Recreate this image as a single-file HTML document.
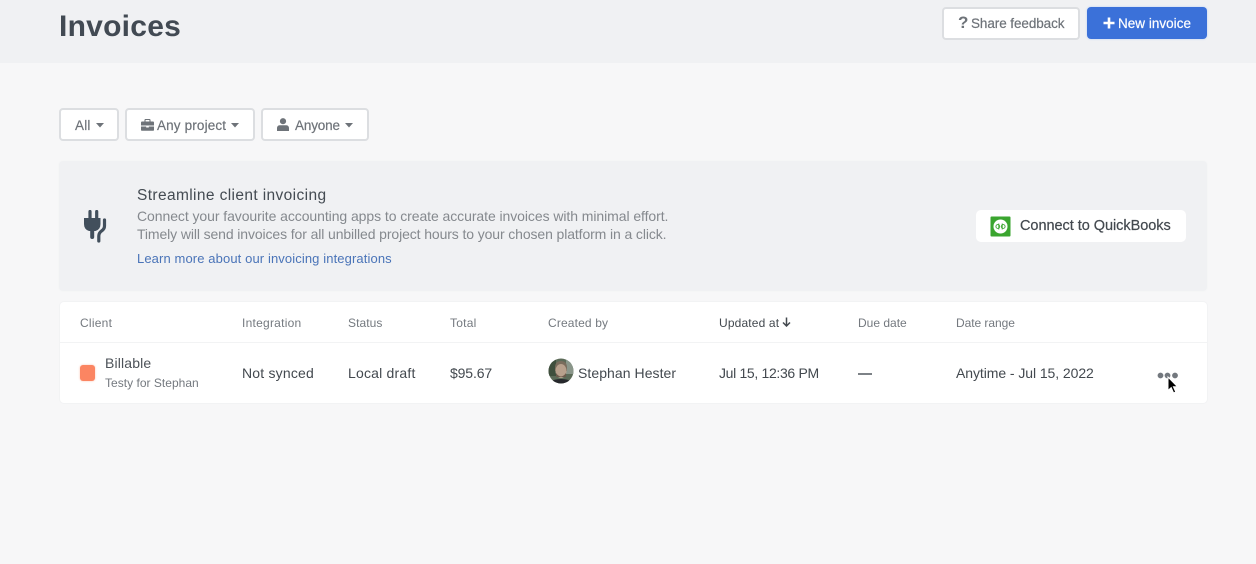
<!DOCTYPE html>
<html><head><meta charset="utf-8">
<style>
html,body{margin:0;padding:0;width:1256px;height:564px;overflow:hidden;background:#f7f7f8;font-family:"Liberation Sans",sans-serif;}
.a{position:absolute;white-space:nowrap;}
.t{position:absolute;white-space:nowrap;line-height:20px;height:20px;}
.btn{position:absolute;box-sizing:border-box;background:#fff;border:2px solid #dcdee1;border-radius:4px;}
.s{-webkit-text-stroke:.2px currentColor;}
.h{font-size:12px;color:#74797f;letter-spacing:.25px;top:313px;}
.c{font-size:14px;color:#43494f;top:363px;letter-spacing:.2px;}
svg{position:absolute;display:block;}
</style></head><body>
<div class="a" style="left:0;top:0;width:1256px;height:63px;background:#f0f1f3;"></div>
<div class="t" style="left:59px;top:11px;height:32px;line-height:32px;font-size:30px;font-weight:bold;color:#424a53;letter-spacing:.25px;">Invoices</div>

<div class="btn" style="left:942px;top:7px;width:138px;height:33px;"></div>
<div class="t" style="left:958px;top:13px;font-size:17px;font-weight:bold;color:#6e7379;">?</div>
<div class="t s" style="left:971px;top:14px;font-size:13.5px;color:#6e7379;letter-spacing:-.08px;">Share feedback</div>
<div class="a" style="left:1087px;top:7px;width:120px;height:32px;background:#3b71d9;border-radius:4px;box-shadow:0 0 2px #b9d0f5;"></div>
<svg style="left:1103px;top:17px;" width="12" height="12"><path d="M6 0.5V11.5M0.5 6H11.5" stroke="#fff" stroke-width="2.6"/></svg>
<div class="t s" style="left:1118px;top:14px;font-size:13.5px;color:#fff;letter-spacing:.02px;">New invoice</div>

<div class="btn" style="left:59px;top:108px;width:60px;height:33px;"></div>
<div class="t s" style="left:75px;top:116px;font-size:13.5px;color:#6e7379;letter-spacing:.2px;">All</div>
<svg style="left:96px;top:123px;" width="8" height="5"><path d="M0 0H8L4 4.5Z" fill="#6e7379"/></svg>
<div class="btn" style="left:125px;top:108px;width:130px;height:33px;"></div>
<svg style="left:141px;top:119px;" width="13" height="12" viewBox="0 0 13 12"><path d="M4 2.5V1.2Q4 .5 4.7 .5H8.3Q9 .5 9 1.2V2.5" fill="none" stroke="#6e7379" stroke-width="1.1"/><path d="M0 3.5Q0 2.5 1 2.5H12Q13 2.5 13 3.5V6.5H0ZM0 7.5H5.2V8.5H7.8V7.5H13V11Q13 11.8 12 11.8H1Q0 11.8 0 11Z" fill="#6e7379"/></svg>
<div class="t s" style="left:157px;top:116px;font-size:13.5px;color:#6e7379;letter-spacing:.15px;">Any project</div>
<svg style="left:231px;top:123px;" width="8" height="5"><path d="M0 0H8L4 4.5Z" fill="#6e7379"/></svg>
<div class="btn" style="left:261px;top:108px;width:108px;height:33px;"></div>
<svg style="left:277px;top:118px;" width="12" height="13" viewBox="0 0 12 13"><circle cx="6" cy="3.2" r="3.1" fill="#6e7379"/><path d="M0 13V10.2Q0 7.2 3 7.2H9Q12 7.2 12 10.2V13Z" fill="#6e7379"/></svg>
<div class="t s" style="left:295px;top:116px;font-size:13.5px;color:#6e7379;letter-spacing:-.15px;">Anyone</div>
<svg style="left:345px;top:123px;" width="8" height="5"><path d="M0 0H8L4 4.5Z" fill="#6e7379"/></svg>

<div class="a" style="left:59px;top:161px;width:1148px;height:130px;box-sizing:border-box;background:#f0f1f3;border-radius:4px;box-shadow:0 0 0 1px #f5f6f6;"></div>
<svg style="left:84px;top:210px;" width="23" height="33" viewBox="0 0 23 33"><path d="M6 1.5V9M12.7 1.5V9" stroke="#424f5c" stroke-width="3.2" stroke-linecap="round"/><path d="M0 8H16.5V14Q16.5 19.5 11.5 21H5Q0 19.5 0 14Z" fill="#424f5c"/><path d="M8.2 20V27" stroke="#424f5c" stroke-width="4" stroke-linecap="round"/><path d="M20.5 10V16Q20.5 19 17.5 21Q14.8 23 14.8 26V31" fill="none" stroke="#424f5c" stroke-width="3.2" stroke-linecap="round"/></svg>
<div class="t" style="left:137px;top:186px;font-size:15.5px;color:#444b52;letter-spacing:.38px;">Streamline client invoicing</div>
<div class="t" style="left:137px;top:206px;font-size:14px;color:#85898e;letter-spacing:-.07px;">Connect your favourite accounting apps to create accurate invoices with minimal effort.</div>
<div class="t" style="left:137px;top:224px;font-size:14px;color:#85898e;letter-spacing:-.11px;">Timely will send invoices for all unbilled project hours to your chosen platform in a click.</div>
<div class="t" style="left:137px;top:249px;font-size:13px;color:#4a74b8;letter-spacing:.11px;">Learn more about our invoicing integrations</div>
<div class="a" style="left:976px;top:210px;width:210px;height:32px;background:#fff;border-radius:5px;"></div>
<svg style="left:990px;top:216px;" width="21" height="21" viewBox="0 0 21 21"><rect x="0.5" y="0.5" width="20" height="20" rx="1" fill="#3aa52f"/><circle cx="10.5" cy="10.5" r="7" fill="#fff"/><path d="M8.8 7.5V13.5M12.2 7.5V13.5" stroke="#3aa52f" stroke-width=".9"/><circle cx="7.8" cy="10.5" r="1.9" fill="none" stroke="#3aa52f" stroke-width=".9"/><circle cx="13.2" cy="10.5" r="1.9" fill="none" stroke="#3aa52f" stroke-width=".9"/></svg>
<div class="t s" style="left:1020px;top:216px;font-size:14.5px;color:#43494f;letter-spacing:-.04px;">Connect to QuickBooks</div>

<div class="a" style="left:60px;top:302px;width:1147px;height:101px;background:#fff;border-radius:4px;box-shadow:0 0 0 1px #f2f3f4;"></div>
<div class="a" style="left:60px;top:342px;width:1147px;height:1px;background:#f2f3f4;"></div>
<div class="t h" style="left:80px;">Client</div>
<div class="t h" style="left:242px;">Integration</div>
<div class="t h" style="left:348px;letter-spacing:.08px;">Status</div>
<div class="t h" style="left:450px;">Total</div>
<div class="t h" style="left:548px;letter-spacing:.15px;">Created by</div>
<div class="t h" style="left:719px;color:#43494f;letter-spacing:.15px;">Updated at</div>
<svg style="left:782px;top:317px;" width="9" height="10" viewBox="0 0 9 10"><path d="M4.5 0.5V9M1 5.5L4.5 9L8 5.5" fill="none" stroke="#43494f" stroke-width="1.5"/></svg>
<div class="t h" style="left:858px;letter-spacing:0;">Due date</div>
<div class="t h" style="left:956px;letter-spacing:-.05px;">Date range</div>

<div class="a" style="left:80px;top:365px;width:15px;height:16px;background:#fb8562;border-radius:3px;box-shadow:0 0 2px #fbc4b2;"></div>
<div class="t" style="left:105px;top:353px;font-size:14px;color:#4c5258;letter-spacing:.15px;">Billable</div>
<div class="t" style="left:105px;top:373px;font-size:12px;color:#74797f;letter-spacing:.02px;">Testy for Stephan</div>
<div class="t c" style="left:242px;">Not synced</div>
<div class="t c" style="left:348px;">Local draft</div>
<div class="t c" style="left:450px;letter-spacing:-.13px;">$95.67</div>
<svg style="left:548px;top:358px;" width="26" height="26" viewBox="0 0 26 26"><defs><clipPath id="av"><circle cx="13" cy="13" r="12.5"/></clipPath></defs><g clip-path="url(#av)"><rect width="26" height="26" fill="#5c6b58"/><rect x="0" y="0" width="8" height="18" fill="#3f4f3d"/><rect x="18" y="0" width="8" height="16" fill="#8a968a"/><path d="M7 10Q7 3 13 3Q19 3 19 10V13H7Z" fill="#7a6c5c"/><ellipse cx="13" cy="13" rx="5.5" ry="7" fill="#b8a08c"/><path d="M8 15Q13 22 18 15V19H8Z" fill="#6d5b4c"/><path d="M2 26Q3 21 13 21Q23 21 24 26Z" fill="#26282c"/></g></svg>
<div class="t c" style="left:578px;letter-spacing:.06px;">Stephan Hester</div>
<div class="t c" style="left:719px;letter-spacing:-.33px;">Jul 15, 12:36 PM</div>
<div class="a" style="left:858px;top:373px;width:14px;height:1.5px;background:#7d8287;"></div>
<div class="t c" style="left:956px;letter-spacing:-.07px;">Anytime - Jul 15, 2022</div>
<svg style="left:1157px;top:371px;" width="22" height="9"><circle cx="3.5" cy="4.5" r="2.9" fill="#73787e"/><circle cx="10.5" cy="4.5" r="2.9" fill="#73787e"/><circle cx="18" cy="4.5" r="2.9" fill="#73787e"/></svg>
<svg style="left:1166px;top:376px;" width="13" height="19" viewBox="0 0 13 19"><path d="M2 1V14.5L5.2 11.6L7.6 17L9.8 16L7.4 10.8H11.5Z" fill="#000" stroke="#fff" stroke-width="1"/></svg>
</body></html>
